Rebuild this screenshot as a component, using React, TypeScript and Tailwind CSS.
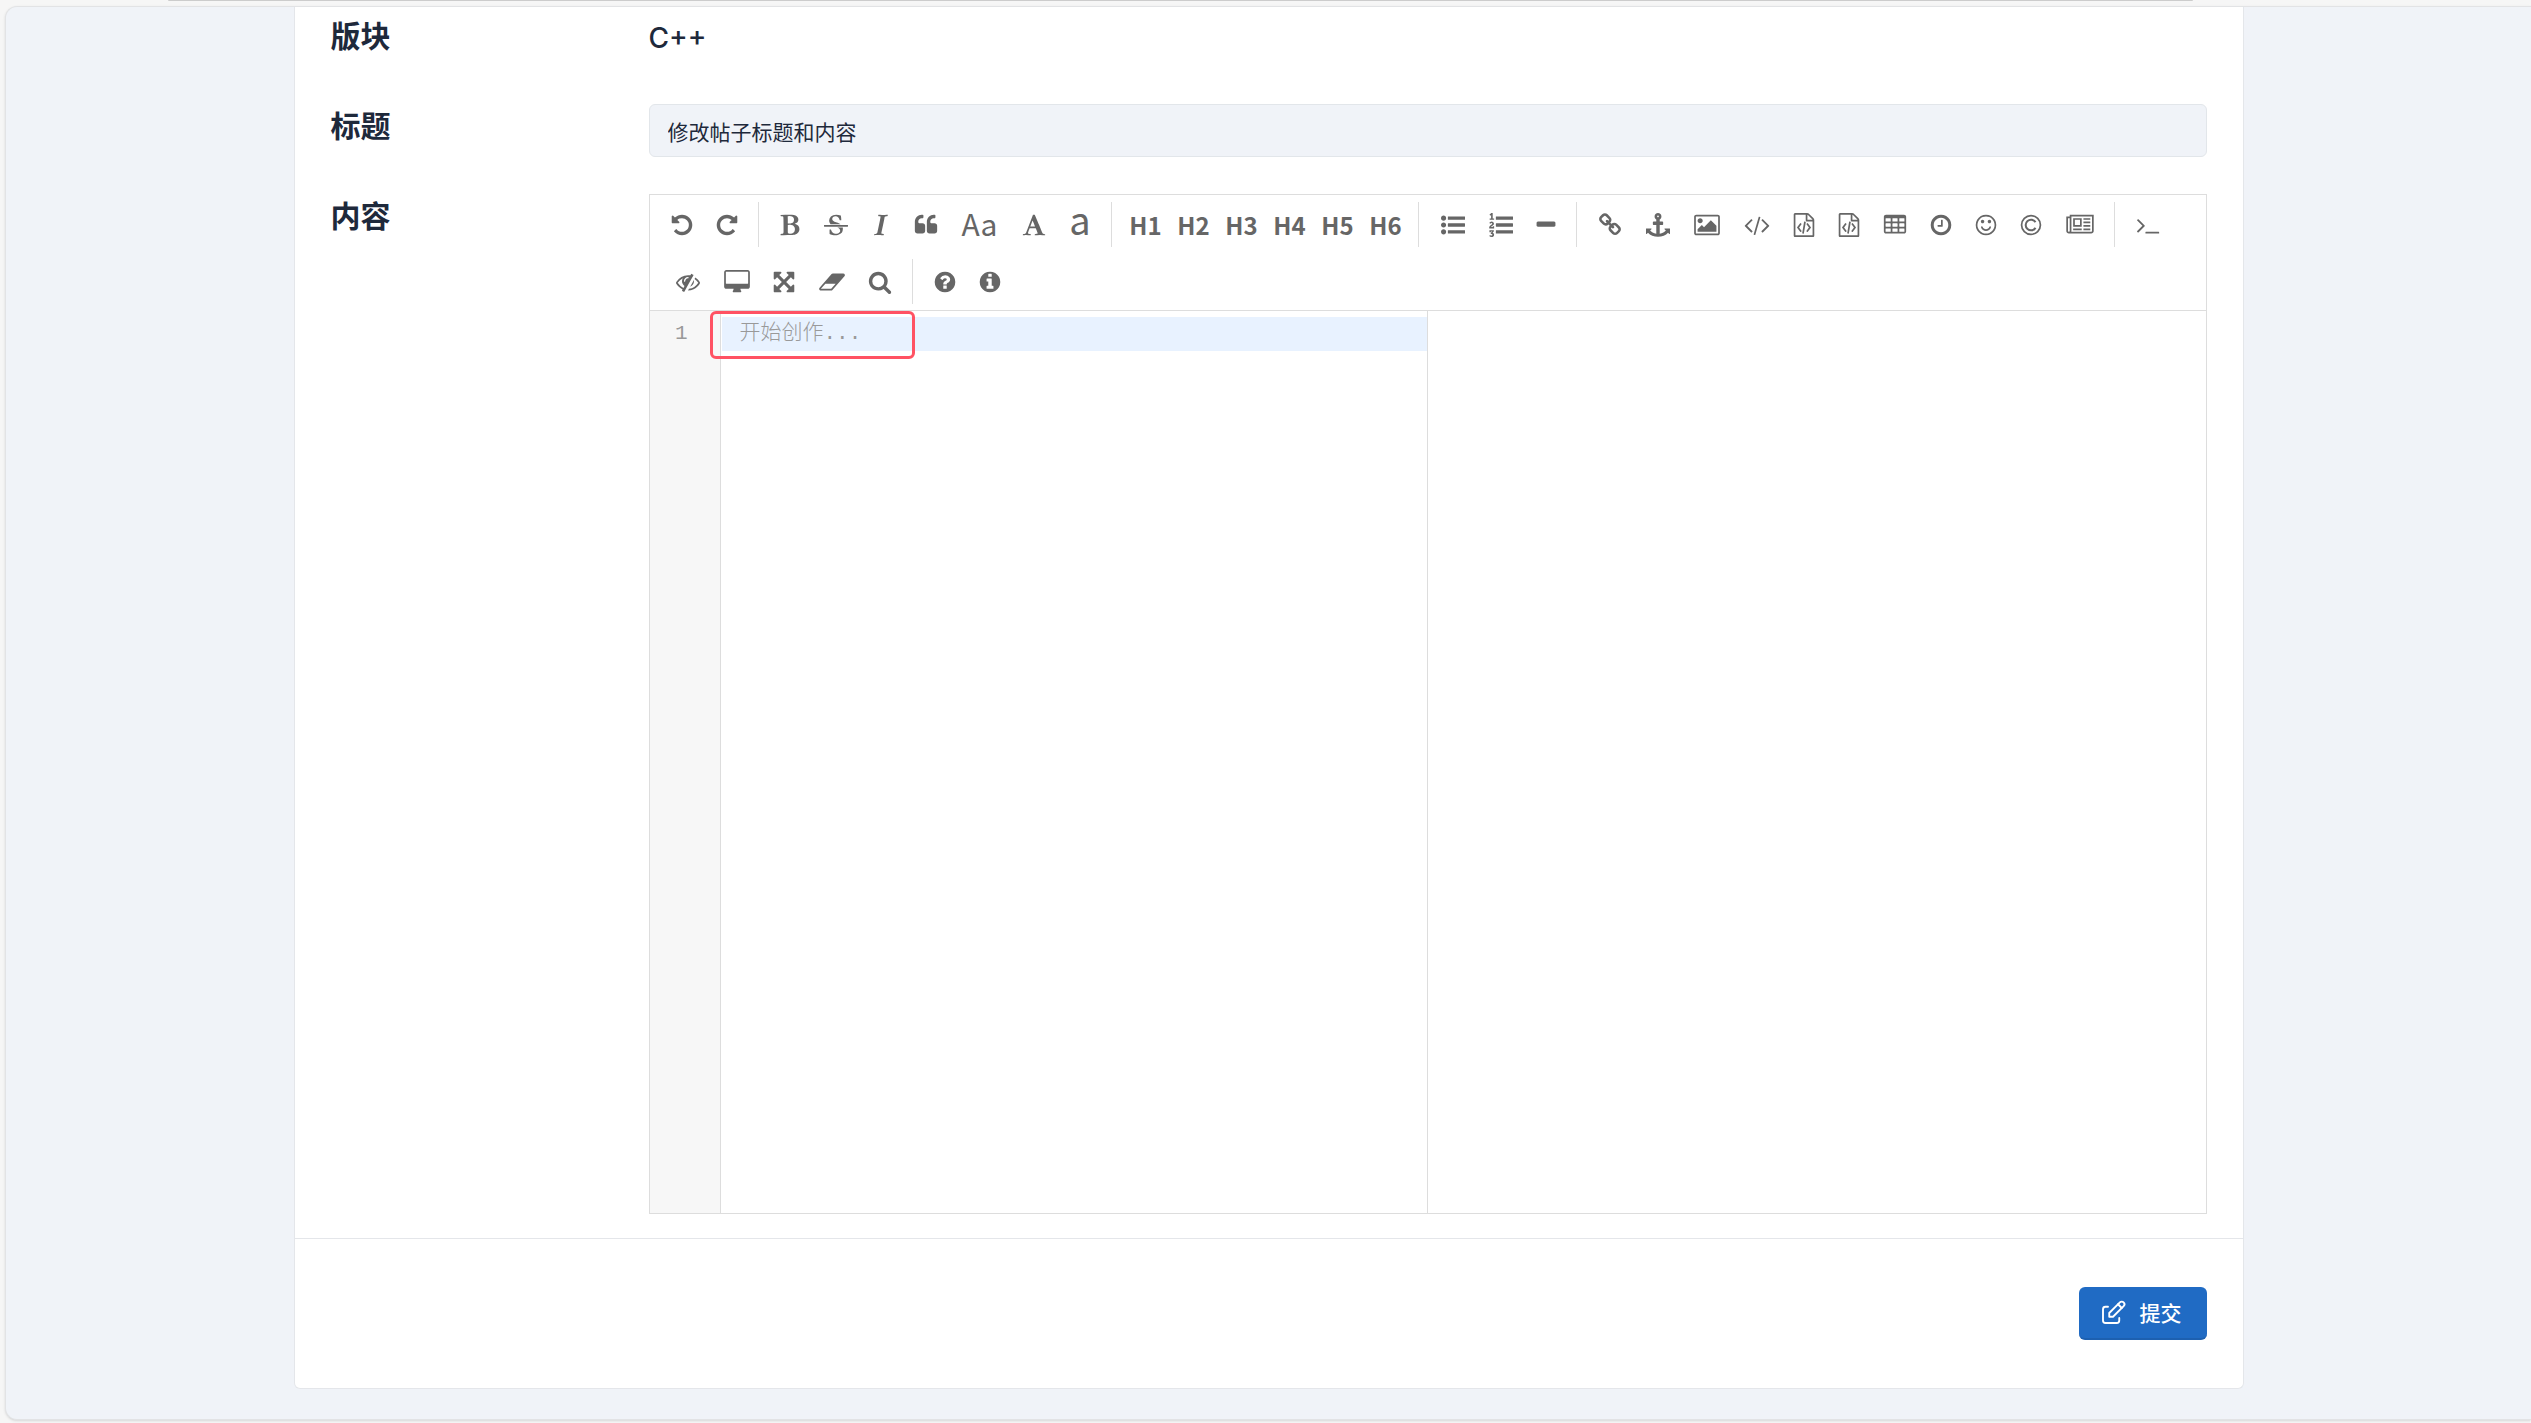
import type { ReactNode } from "react";

const sansCjk = "font-['Noto_Sans_CJK_SC',sans-serif]";

type Glyph = { vb: string; size: string; d: string[] };

const SQUARE = "0 0 1792 1792";
const FULL = "-64 0 1920 1792";

const glyphs: Record<string, Glyph> = {
  undo: { vb: SQUARE, size: "w-6", d: ["M1664 896q0 156-61 298t-164 245-245 164-298 61q-172 0-327-72.5t-264-204.5q-7-10-6.5-22.5t8.5-20.5l137-138q10-9 25-9 16 2 23 12 73 95 179 147t225 52q104 0 198.5-40.5t163.5-109.5 109.5-163.5 40.5-198.5-40.5-198.5-109.5-163.5-163.5-109.5-198.5-40.5q-98 0-188 35.5t-160 101.5l137 138q31 30 14 69-17 40-59 40h-448q-26 0-45-19t-19-45v-448q0-42 40-59 39-17 69 14l130 129q107-101 244.5-156.5t284.5-55.5q156 0 298 61t245 164 164 245 61 298z"] },
  redo: { vb: SQUARE, size: "w-6", d: ["M1664 256v448q0 26-19 45t-45 19h-448q-42 0-59-40-17-39 14-69l138-138q-148-137-349-137-104 0-198.5 40.5t-163.5 109.5-109.5 163.5-40.5 198.5 40.5 198.5 109.5 163.5 163.5 109.5 198.5 40.5q119 0 225-52t179-147q7-10 23-12 15 0 25 9l137 138q9 8 9.5 20.5t-7.5 22.5q-109 132-264 204.5t-327 72.5q-156 0-298-61t-245-164-164-245-61-298 61-298 164-245 245-164 298-61q147 0 284.5 55.5t244.5 156.5l130-129q29-31 70-14 39 17 39 59z"] },
  bold: { vb: SQUARE, size: "w-6", d: ["M747 1521q74 32 140 32 376 0 376-335 0-114-41-180-27-44-61.5-74t-67.5-46.5-80.5-25-84-10.5-94.5-2q-73 0-101 10 0 53-.5 159t-.5 158q0 8-1 67.5t-.5 96.5 4.5 83.5 12 66.5zm-14-746q42 7 109 7 82 0 143-13t110-44.5 74.5-89.5 25.5-142q0-70-29-122.5t-79-82-108-43.5-124-14q-50 0-130 13 0 50 4 151t4 152q0 27-.5 80t-.5 79q0 46 1 69zm-541 889l2-94q15-4 85-16t106-27q7-12 12.5-27t8.5-33.5 5.5-32.5 3-37.5.5-34v-65.5q0-982-22-1025-4-8-22-14.5t-44.5-11-49.5-7-48.5-4.5-30.5-3l-4-83q98-2 340-11.5t373-9.5q23 0 68 .5t68 .5q70 0 136.5 13t128.5 42 108 71 74 104.5 28 137.5q0 52-16.5 95.5t-39 72-64.5 57.5-73 45-84 40q154 35 256.5 134t102.5 248q0 100-35 179.5t-93.5 130.5-138 85.5-163.5 48.5-176 14q-44 0-132-3t-132-3q-106 0-307 11t-231 12z"] },
  strike: { vb: SQUARE, size: "w-6", d: ["M1760 896q14 0 23 9t9 23v64q0 14-9 23t-23 9h-1728q-14 0-23-9t-9-23v-64q0-14 9-23t23-9h1728zm-1277-64q-28-35-51-80-48-97-48-188 0-181 134-309 133-127 393-127 50 0 167 19 66 12 177 48 10 38 21 118 14 123 14 183 0 18-5 45l-12 3-84-6-14-2q-50-149-103-205-88-91-210-91-114 0-182 59-67 58-67 146 0 73 66 140t279 129q69 20 173 66 58 28 95 52h-743zm507 256h411q7 39 7 92 0 111-41 212-23 55-71 104-37 35-109 81-80 48-153 66-80 21-203 21-114 0-195-23l-140-40q-57-16-72-28-8-8-8-22v-13q0-108-2-156-1-30 0-68l2-37v-44l102-2q15 34 30 71t22.5 56 12.5 27q35 57 80 94 43 36 105 57 59 22 132 22 64 0 139-27 77-26 122-86 47-61 47-129 0-84-81-157-34-29-137-71z"] },
  italic: { vb: SQUARE, size: "w-6", d: ["M384 1662l17-85q22-7 61.5-16.5t72-19 59.5-23.5q28-35 41-101 1-7 62-289t114-543.5 52-296.5v-25q-24-13-54.5-18.5t-69.5-8-58-5.5l19-103q33 2 120 6.5t149.5 7 120.5 2.5q48 0 98.5-2.5t121-7 98.5-6.5q-5 39-19 89-30 10-101.5 28.5t-108.5 33.5q-8 19-14 42.5t-9 40-7.5 45.5-6.5 42q-27 148-87.5 419.5t-77.5 355.5q-2 9-13 58t-20 90-16 83.5-6 57.5l1 18q17 4 185 31-3 44-16 99-11 0-32.5 1.5t-32.5 1.5q-29 0-87-10t-86-10q-138-2-206-2-51 0-143 9t-121 11z"] },
  quote: { vb: SQUARE, size: "w-6", d: ["M832 960v384q0 80-56 136t-136 56h-384q-80 0-136-56t-56-136v-704q0-104 40.5-198.5t109.5-163.5 163.5-109.5 198.5-40.5h64q26 0 45 19t19 45v128q0 26-19 45t-45 19h-64q-106 0-181 75t-75 181v32q0 40 28 68t68 28h224q80 0 136 56t56 136zm896 0v384q0 80-56 136t-136 56h-384q-80 0-136-56t-56-136v-704q0-104 40.5-198.5t109.5-163.5 163.5-109.5 198.5-40.5h64q26 0 45 19t19 45v128q0 26-19 45t-45 19h-64q-106 0-181 75t-75 181v32q0 40 28 68t68 28h224q80 0 136 56t56 136z"] },
  font: { vb: SQUARE, size: "w-6", d: ["M789 559l-170 450q33 0 136.5 2t160.5 2q19 0 57-2-87-253-184-452zm-725 1105l2-79q23-7 56-12.5t57-10.5 49.5-14.5 44.5-29 31-50.5l237-616 280-724h128q8 14 11 21l205 480q33 78 106 257.5t114 274.5q15 34 58 144.5t72 168.5q20 45 35 57 19 15 88 29.5t84 20.5q6 38 6 57 0 5-.5 13.5t-.5 12.5q-63 0-190-8t-191-8q-76 0-215 7t-178 8q0-43 4-78l131-28q1 0 12.5-2.5t15.5-3.5 14.5-4.5 15-6.5 11-8 9-11 2.5-14q0-16-31-96.5t-72-177.5-42-100l-450-2q-26 58-76.5 195.5t-50.5 162.5q0 22 14 37.5t43.5 24.5 48.5 13.5 57 8.5 41 4q1 19 1 58 0 9-2 27-58 0-174.5-10t-174.5-10q-8 0-26.5 4t-21.5 4q-80 14-188 14z"] },
  ul: { vb: SQUARE, size: "w-6", d: ["M384 1408q0 80-56 136t-136 56-136-56-56-136 56-136 136-56 136 56 56 136zm0-512q0 80-56 136t-136 56-136-56-56-136 56-136 136-56 136 56 56 136zm1408 416v192q0 13-9.5 22.5t-22.5 9.5h-1216q-13 0-22.5-9.5t-9.5-22.5v-192q0-13 9.5-22.5t22.5-9.5h1216q13 0 22.5 9.5t9.5 22.5zm-1408-928q0 80-56 136t-136 56-136-56-56-136 56-136 136-56 136 56 56 136zm1408 416v192q0 13-9.5 22.5t-22.5 9.5h-1216q-13 0-22.5-9.5t-9.5-22.5v-192q0-13 9.5-22.5t22.5-9.5h1216q13 0 22.5 9.5t9.5 22.5zm0-512v192q0 13-9.5 22.5t-22.5 9.5h-1216q-13 0-22.5-9.5t-9.5-22.5v-192q0-13 9.5-22.5t22.5-9.5h1216q13 0 22.5 9.5t9.5 22.5z"] },
  ol: { vb: SQUARE, size: "w-6", d: ["M381 1620q0 80-54.5 126t-135.5 46q-106 0-172-66l57-88q49 45 106 45 29 0 50.5-14.5t21.5-42.5q0-64-105-56l-26-56q8-10 32.5-43.5t42.5-54 37-38.5v-1q-16 0-48.5 1t-48.5 1v53h-106v-152h333v88l-95 115q51 12 81 49t30 88zm2-627v159h-362q-6-36-6-54 0-51 23.5-93t56.5-68 66-47.5 56.5-43.5 23.5-45q0-25-14.5-38.5t-39.5-13.5q-46 0-81 58l-85-59q24-51 71.5-79.5t105.5-28.5q73 0 123 41.5t50 112.5q0 50-34 91.5t-75 64.5-75.5 50.5-35.5 52.5h127v-60h105zm1409 319v192q0 13-9.5 22.5t-22.5 9.5h-1216q-13 0-22.5-9.5t-9.5-22.5v-192q0-14 9-23t23-9h1216q13 0 22.5 9.5t9.5 22.5zm-1408-899v99h-335v-99h107q0-41 .5-121.5t.5-121.5v-12h-2q-8 17-50 54l-71-76 136-127h106v404h108zm1408 387v192q0 13-9.5 22.5t-22.5 9.5h-1216q-13 0-22.5-9.5t-9.5-22.5v-192q0-14 9-23t23-9h1216q13 0 22.5 9.5t9.5 22.5zm0-512v192q0 13-9.5 22.5t-22.5 9.5h-1216q-13 0-22.5-9.5t-9.5-22.5v-192q0-13 9.5-22.5t22.5-9.5h1216q13 0 22.5 9.5t9.5 22.5z"] },
  minus: { vb: SQUARE, size: "w-6", d: ["M1600 736v192q0 40-28 68t-68 28h-1216q-40 0-68-28t-28-68v-192q0-40 28-68t68-28h1216q40 0 68 28t28 68z"] },
  link: { vb: SQUARE, size: "w-6", d: ["M1520 1216q0-40-28-68l-208-208q-28-28-68-28-42 0-72 32 3 3 19 18.5t21.5 21.5 15 19 13 25.5 3.5 27.5q0 40-28 68t-68 28q-15 0-27.5-3.5t-25.5-13-19-15-21.5-21.5-18.5-19q-33 31-33 73 0 40 28 68l206 207q27 27 68 27 40 0 68-26l147-146q28-28 28-67zm-703-705q0-40-28-68l-206-207q-28-28-68-28-39 0-68 27l-147 146q-28 28-28 67 0 40 28 68l208 208q27 27 68 27 42 0 72-31-3-3-19-18.5t-21.5-21.5-15-19-13-25.5-3.5-27.5q0-40 28-68t68-28q15 0 27.5 3.5t25.5 13 19 15 21.5 21.5 18.5 19q33-31 33-73zm895 705q0 120-85 203l-147 146q-83 83-203 83-121 0-204-85l-206-207q-83-83-83-203 0-123 88-209l-88-88q-86 88-208 88-120 0-204-84l-208-208q-84-84-84-204t85-203l147-146q83-83 203-83 121 0 204 85l206 207q83 83 83 203 0 123-88 209l88 88q86-88 208-88 120 0 204 84l208 208q84 84 84 204z"] },
  anchor: { vb: SQUARE, size: "w-6", d: ["M960 256q0-26-19-45t-45-19-45 19-19 45 19 45 45 19 45-19 19-45zm832 928v352q0 22-20 30-8 2-12 2-12 0-23-9l-93-93q-119 143-318.5 226.5t-429.5 83.5-429.5-83.5-318.5-226.5l-93 93q-9 9-23 9-4 0-12-2-20-8-20-30v-352q0-14 9-23t23-9h352q22 0 30 20 8 19-7 35l-100 100q67 91 189.5 153.5t271.5 82.5v-647h-192q-26 0-45-19t-19-45v-128q0-26 19-45t45-19h192v-163q-58-34-93-92.5t-35-128.5q0-106 75-181t181-75 181 75 75 181q0 70-35 128.5t-93 92.5v163h192q26 0 45 19t19 45v128q0 26-19 45t-45 19h-192v647q149-20 271.5-82.5t189.5-153.5l-100-100q-15-16-7-35 8-20 30-20h352q14 0 23 9t9 23z"] },
  picture: { vb: FULL, size: "w-[26px]", d: ["M576 576q0 80-56 136t-136 56-136-56-56-136 56-136 136-56 136 56 56 136zm1024 384v448h-1408v-192l320-320 160 160 512-512zm96-704h-1600q-13 0-22.5 9.5t-9.5 22.5v1216q0 13 9.5 22.5t22.5 9.5h1600q13 0 22.5-9.5t9.5-22.5v-1216q0-13-9.5-22.5t-22.5-9.5zm160 32v1216q0 66-47 113t-113 47h-1600q-66 0-113-47t-47-113v-1216q0-66 47-113t113-47h1600q66 0 113 47t47 113z"] },
  code: { vb: "0 0 1920 1792", size: "w-[26px]", d: ["M617 1399l-50 50q-10 10-23 10t-23-10l-466-466q-10-10-10-23t10-23l466-466q10-10 23-10t23 10l50 50q10 10 10 23t-10 23l-393 393 393 393q10 10 10 23t-10 23zm591-1067l-373 1291q-4 13-15.5 19.5t-23.5 2.5l-62-17q-13-4-19.5-15.5t-2.5-24.5l373-1291q4-13 15.5-19.5t23.5-2.5l62 17q13 4 19.5 15.5t2.5 24.5zm657 651l-466 466q-10 10-23 10t-23-10l-50-50q-10-10-10-23t10-23l393-393-393-393q-10-10-10-23t10-23l50-50q10-10 23-10t23 10l466 466q10 10 10 23t-10 23z"] },
  file: { vb: SQUARE, size: "w-6", d: ["M1596 380q28 28 48 76t20 88v1152q0 40-28 68t-68 28h-1344q-40 0-68-28t-28-68v-1600q0-40 28-68t68-28h896q40 0 88 20t76 48zm-444-244v376h376q-10-29-22-41l-313-313q-12-12-41-22zm384 1528v-1024h-416q-40 0-68-28t-28-68v-416h-768v1536h1280zm-928-896q8-11 21-12.5t24 6.5l51 38q11 8 12.5 21t-6.5 24l-182 243 182 243q8 11 6.5 24t-12.5 21l-51 38q-11 8-24 6.5t-21-12.5l-226-301q-14-19 0-38zm802 301q14 19 0 38l-226 301q-8 11-21 12.5t-24-6.5l-51-38q-11-8-12.5-21t6.5-24l182-243-182-243q-8-11-6.5-24t12.5-21l51-38q11-8 24-6.5t21 12.5zm-620 461q-13-2-20.5-13t-5.5-24l138-831q2-13 13-20.5t24-5.5l63 10q13 2 20.5 13t5.5 24l-138 831q-2 13-13 20.5t-24 5.5z"] },
  table: { vb: SQUARE, size: "w-6", d: [
    "M224 128h1344q66 0 113 47t47 113v1088q0 66-47 113t-113 47h-1344q-66 0-113-47t-47-113v-1088q0-66 47-113t113-47zM224 384h320q32 0 32 32v192q0 32-32 32h-320q-32 0-32-32v-192q0-32 32-32zM736 384h320q32 0 32 32v192q0 32-32 32h-320q-32 0-32-32v-192q0-32 32-32zM1248 384h320q32 0 32 32v192q0 32-32 32h-320q-32 0-32-32v-192q0-32 32-32zM224 768h320q32 0 32 32v192q0 32-32 32h-320q-32 0-32-32v-192q0-32 32-32zM736 768h320q32 0 32 32v192q0 32-32 32h-320q-32 0-32-32v-192q0-32 32-32zM1248 768h320q32 0 32 32v192q0 32-32 32h-320q-32 0-32-32v-192q0-32 32-32zM224 1152h320q32 0 32 32v192q0 32-32 32h-320q-32 0-32-32v-192q0-32 32-32zM736 1152h320q32 0 32 32v192q0 32-32 32h-320q-32 0-32-32v-192q0-32 32-32zM1248 1152h320q32 0 32 32v192q0 32-32 32h-320q-32 0-32-32v-192q0-32 32-32z",
  ] },
  clock: { vb: SQUARE, size: "w-6", d: ["M1024 544v448q0 14-9 23t-23 9h-320q-14 0-23-9t-9-23v-64q0-14 9-23t23-9h224v-352q0-14 9-23t23-9h64q14 0 23 9t9 23zm416 352q0-148-73-273t-198-198-273-73-273 73-198 198-73 273 73 273 198 198 273 73 273-73 198-198 73-273zm224 0q0 209-103 385.5t-279.5 279.5-385.5 103-385.5-103-279.5-279.5-103-385.5 103-385.5 279.5-279.5 385.5-103 385.5 103 279.5 279.5 103 385.5z"] },
  smile: { vb: SQUARE, size: "w-6", d: ["M1262 1075q-37 121-138 195t-228 74-228-74-138-195q-8-25 4-48.5t38-31.5q25-8 48.5 4t31.5 38q25 80 92.5 129.5t151.5 49.5 151.5-49.5 92.5-129.5q8-26 32-38t49-4 37 31.5 4 48.5zm-494-435q0 53-37.5 90.5t-90.5 37.5-90.5-37.5-37.5-90.5 37.5-90.5 90.5-37.5 90.5 37.5 37.5 90.5zm512 0q0 53-37.5 90.5t-90.5 37.5-90.5-37.5-37.5-90.5 37.5-90.5 90.5-37.5 90.5 37.5 37.5 90.5zm256 256q0-130-51-248.5t-136.5-204-204-136.5-248.5-51-248.5 51-204 136.5-136.5 204-51 248.5 51 248.5 136.5 204 204 136.5 248.5 51 248.5-51 204-136.5 136.5-204 51-248.5zm128 0q0 209-103 385.5t-279.5 279.5-385.5 103-385.5-103-279.5-279.5-103-385.5 103-385.5 279.5-279.5 385.5-103 385.5 103 279.5 279.5 103 385.5z"] },
  news: { vb: "0 0 2048 1792", size: "w-7", d: ["M1024 512h-384v384h384v-384zm128 640v128h-640v-128h640zm0-768v640h-640v-640h640zm640 768v128h-512v-128h512zm0-256v128h-512v-128h512zm0-256v128h-512v-128h512zm0-256v128h-512v-128h512zm-1536 960v-960h-128v960q0 26 19 45t45 19 45-19 19-45zm1664 0v-1088h-1536v1088q0 33-11 64h1483q26 0 45-19t19-45zm128-1216v1216q0 80-56 136t-136 56h-1664q-80 0-136-56t-56-136v-1088h256v-128h1792z"] },
  terminal: { vb: SQUARE, size: "w-6", d: ["M649 983l-466 466q-10 10-23 10t-23-10l-50-50q-10-10-10-23t10-23l393-393-393-393q-10-10-10-23t10-23l50-50q10-10 23-10t23 10l466 466q10 10 10 23t-10 23zm1079 457v64q0 14-9 23t-23 9h-960q-14 0-23-9t-9-23v-64q0-14 9-23t23-9h960q14 0 23 9t9 23z"] },
  eye: { vb: SQUARE, size: "w-6", d: ["M555 1335l78-141q-87-63-136-159t-49-203q0-121 61-225-229 117-381 353 167 258 427 375zm389-759q0-20-14-34t-34-14q-125 0-214.5 89.5t-89.5 214.5q0 20 14 34t34 14 34-14 14-34q0-86 61-147t147-61q20 0 34-14t14-34zm363-191q0 7-1 9-106 189-316 567t-315 566l-49 89q-10 16-28 16-12 0-134-70-16-10-16-28 0-12 44-87-143-65-263.5-173t-208.5-245q-20-31-20-69t20-69q153-235 380-371t496-136q89 0 180 17l54-97q10-16 28-16 5 0 18 6t31 15.5 33 18.5 31.5 18.5 19.5 11.5q16 10 16 27zm37 447q0 139-79 253.5t-209 164.5l280-502q8 45 8 84zm448 128q0 35-20 69-39 64-109 145-150 172-347.5 267t-419.5 95l74-132q212-18 392.5-137t301.5-307q-115-179-282-294l63-112q95 64 182.5 153t144.5 184q20 34 20 69z"] },
  desktop: { vb: FULL, size: "w-[26px]", d: ["M1728 992v-832q0-13-9.5-22.5t-22.5-9.5h-1600q-13 0-22.5 9.5t-9.5 22.5v832q0 13 9.5 22.5t22.5 9.5h1600q13 0 22.5-9.5t9.5-22.5zm128-832v1088q0 66-47 113t-113 47h-544q0 37 16 77.5t32 71 16 43.5q0 26-19 45t-45 19h-512q-26 0-45-19t-19-45q0-14 16-44t32-70 16-78h-544q-66 0-113-47t-47-113v-1088q0-66 47-113t113-47h1600q66 0 113 47t47 113z"] },
  expand: { vb: SQUARE, size: "w-6", d: ["M1411 541l-355 355 355 355 144-144q29-31 70-14 39 17 39 59v448q0 26-19 45t-45 19h-448q-42 0-59-40-17-39 14-69l144-144-355-355-355 355 144 144q31 30 14 69-17 40-59 40h-448q-26 0-45-19t-19-45v-448q0-42 40-59 39-17 69 14l144 144 355-355-355-355-144 144q-19 19-45 19-12 0-24-5-40-17-40-59v-448q0-26 19-45t45-19h448q42 0 59 40 17 39-14 69l-144 144 355 355 355-355-144-144q-31-30-14-69 17-40 59-40h448q26 0 45 19t19 45v448q0 42-39 59-13 5-25 5-26 0-45-19z"] },
  eraser: { vb: FULL, size: "w-[26px]", d: ["M832 1408l336-384h-768l-336 384h768zm1013-1077q15 34 9.5 71.5t-30.5 65.5l-896 1024q-38 44-96 44h-768q-38 0-69.5-20.5t-47.5-54.5q-15-34-9.5-71.5t30.5-65.5l896-1024q38-44 96-44h768q38 0 69.5 20.5t47.5 54.5z"] },
  search: { vb: SQUARE, size: "w-6", d: ["M1216 832q0-185-131.5-316.5t-316.5-131.5-316.5 131.5-131.5 316.5 131.5 316.5 316.5 131.5 316.5-131.5 131.5-316.5zm512 832q0 52-38 90t-90 38q-54 0-90-38l-343-342q-179 124-399 124-143 0-273.5-55.5t-225-150-150-225-55.5-273.5 55.5-273.5 150-225 225-150 273.5-55.5 273.5 55.5 225 150 150 225 55.5 273.5q0 220-124 399l343 343q37 37 37 90z"] },
  help: { vb: SQUARE, size: "w-6", d: ["M1024 1376v-192q0-14-9-23t-23-9h-192q-14 0-23 9t-9 23v192q0 14 9 23t23 9h192q14 0 23-9t9-23zm256-672q0-88-55.5-163t-138.5-116-170-41q-243 0-371 213-15 24 8 42l132 100q7 6 19 6 16 0 25-12 53-68 86-92 34-24 86-24 48 0 85.5 26t37.5 59q0 38-20 61t-68 45q-63 28-115.5 86.5t-52.5 125.5v36q0 14 9 23t23 9h192q14 0 23-9t9-23q0-19 21.5-49.5t54.5-49.5q32-18 49-28.5t46-35 44.5-48 28-60.5 12.5-81zm384 192q0 209-103 385.5t-279.5 279.5-385.5 103-385.5-103-279.5-279.5-103-385.5 103-385.5 279.5-279.5 385.5-103 385.5 103 279.5 279.5 103 385.5z"] },
  info: { vb: SQUARE, size: "w-6", d: ["M1152 1376v-160q0-14-9-23t-23-9h-96v-512q0-14-9-23t-23-9h-320q-14 0-23 9t-9 23v160q0 14 9 23t23 9h96v320h-96q-14 0-23 9t-9 23v160q0 14 9 23t23 9h448q14 0 23-9t9-23zm-128-896v-160q0-14-9-23t-23-9h-192q-14 0-23 9t-9 23v160q0 14 9 23t23 9h192q14 0 23-9t9-23zm640 416q0 209-103 385.5t-279.5 279.5-385.5 103-385.5-103-279.5-279.5-103-385.5 103-385.5 279.5-279.5 385.5-103 385.5 103 279.5 279.5 103 385.5z"] },
};

function GlyphIcon({ name }: { name: string }) {
  const g = glyphs[name];
  return (
    <svg viewBox={g.vb} className={`h-6 shrink-0 ${g.size}`} fill="currentColor" fillRule="evenodd" aria-hidden="true">
      {g.d.map((d) => (
        <path key={d} d={d} />
      ))}
    </svg>
  );
}

function CopyrightIcon() {
  return (
    <svg viewBox="0 0 1792 1792" className="h-6 w-6 shrink-0" fill="none" stroke="currentColor" aria-hidden="true">
      <circle cx="896" cy="896" r="704" strokeWidth="128" />
      <path d="M1235 680a400 400 0 1 0 0 432" strokeWidth="150" />
    </svg>
  );
}

type Tool = { label: string; width: string; icon?: string; content?: ReactNode };

const heading = (n: number): Tool => ({
  label: `标题${n}`,
  width: "w-12",
  content: <span className="text-2xl font-bold">H{n}</span>,
});

const groups: Tool[][] = [
  [
    { label: "撤销", width: "w-[45px]", icon: "undo" },
    { label: "重做", width: "w-[45px]", icon: "redo" },
  ],
  [
    { label: "粗体", width: "w-[43px]", icon: "bold" },
    { label: "删除线", width: "w-12", icon: "strike" },
    { label: "斜体", width: "w-[43px]", icon: "italic" },
    { label: "引用", width: "w-[47px]", icon: "quote" },
    { label: "首字母大写", width: "w-[60px]", content: <span className="pb-1 text-[30px] leading-none font-normal">Aa</span> },
    { label: "大写", width: "w-12", icon: "font" },
    { label: "小写", width: "w-[45px]", content: <span className="pb-3 text-[38px] leading-none font-normal">a</span> },
  ],
  [1, 2, 3, 4, 5, 6].map(heading),
  [
    { label: "无序列表", width: "w-12", icon: "ul" },
    { label: "有序列表", width: "w-12", icon: "ol" },
    { label: "横线", width: "w-[43px]", icon: "minus" },
  ],
  [
    { label: "链接", width: "w-[47px]", icon: "link" },
    { label: "引用链接", width: "w-12", icon: "anchor" },
    { label: "图片", width: "w-[50px]", icon: "picture" },
    { label: "行内代码", width: "w-[50px]", icon: "code" },
    { label: "预格式文本", width: "w-[45px]", icon: "file" },
    { label: "代码块", width: "w-[45px]", icon: "file" },
    { label: "表格", width: "w-[47px]", icon: "table" },
    { label: "日期时间", width: "w-[45px]", icon: "clock" },
    { label: "表情", width: "w-[45px]", icon: "smile" },
    { label: "实体字符", width: "w-[45px]", content: <CopyrightIcon /> },
    { label: "分页符", width: "w-[52px]", icon: "news" },
  ],
  [
    { label: "跳转到行", width: "w-[47px]", icon: "terminal" },
    { label: "关闭预览", width: "ml-1 w-12", icon: "eye" },
    { label: "全窗口预览", width: "w-[50px]", icon: "desktop" },
    { label: "全屏", width: "w-[45px]", icon: "expand" },
    { label: "清空", width: "w-[50px]", icon: "eraser" },
    { label: "搜索", width: "w-[47px]", icon: "search" },
  ],
  [
    { label: "帮助", width: "w-[45px]", icon: "help" },
    { label: "关于", width: "w-[45px]", icon: "info" },
  ],
];

function Toolbar() {
  return (
    <div role="toolbar" aria-label="编辑工具" className="flex flex-wrap border-b border-[#dddddd] px-[10px] pt-px pr-8 text-[#666666]">
      {groups.flatMap((group, gi) => [
        ...(gi > 0
          ? [<span key={`sep-${gi}`} className="mr-[10px] ml-2 my-[6px] h-[45px] w-px bg-[#dddddd]" />]
          : []),
        ...group.map((tool) => (
          <button
            key={tool.label}
            type="button"
            aria-label={tool.label}
            className={`flex h-[57px] items-center justify-center leading-none ${tool.width}`}
          >
            {tool.icon ? <GlyphIcon name={tool.icon} /> : tool.content}
          </button>
        )),
      ])}
    </div>
  );
}

function Editor() {
  return (
    <div className="flex min-w-0 grow flex-col border border-[#dddddd]">
      <Toolbar />
      <div className="flex h-[902px]">
        <div className="flex w-1/2 border-r border-[#dddddd] font-['Liberation_Mono','Noto_Sans_CJK_SC',monospace] text-[21px]">
          <div className="w-[71px] shrink-0 border-r border-[#dddddd] bg-[#f7f7f7] pt-[6px] pr-8 text-right leading-[34px] text-[#999999]">
            1
          </div>
          <div className="relative grow pt-[6px] pl-px">
            <textarea
              id="content"
              rows={1}
              placeholder="开始创作..."
              className="block h-[34px] w-full resize-none overflow-hidden bg-[#e8f2ff] pl-[18px] leading-[34px] font-light outline-none placeholder:text-[#999999]"
            />
            <div className="pointer-events-none absolute top-0 -left-[11px] h-12 w-[205px] rounded-md border-[3px] border-[#ff5263]" />
          </div>
        </div>
        <div className="w-1/2" />
      </div>
    </div>
  );
}

function EditIcon() {
  return (
    <svg
      viewBox="0 0 24 24"
      className="h-[30px] w-[30px]"
      fill="none"
      stroke="currentColor"
      strokeWidth="1.5"
      strokeLinecap="round"
      strokeLinejoin="round"
      aria-hidden="true"
    >
      <path d="M8 7H6a2 2 0 0 0-2 2v9a2 2 0 0 0 2 2h9a2 2 0 0 0 2-2v-2" />
      <path d="M9 15h3l8.500-8.500a1.500 1.500 0 0 0-3-3L9 12v3" />
      <path d="M16 5l3 3" />
    </svg>
  );
}

export default function App() {
  return (
    <div className={`min-h-screen bg-[#f6f6f6] pl-[5px] text-[#1e293b] ${sansCjk}`}>
      <div className="flex h-[6px] justify-center pr-[338px] pl-[163px]">
        <div className="h-px grow rounded-b bg-[#cccccc]" />
      </div>
      <div className="rounded-l-xl border border-r-0 border-[#e2e3e5] bg-[#f0f3f8] pb-[30px] shadow-sm">
        <main className="mx-auto max-w-[1950px] rounded-b-md border border-t-0 border-[#e4e6ea] bg-white">
          <form onSubmit={(e) => e.preventDefault()}>
            <div className="flex flex-col px-9 pb-6">
              <div className="flex h-[97px] items-start">
                <span className="w-[318px] shrink-0 pt-[11px] text-[30px] leading-8 font-bold">版块</span>
                <span className="pt-[15px] font-['Inter',sans-serif] text-[28px] leading-8 font-medium">C++</span>
              </div>
              <div className="flex items-start pb-[37px]">
                <label htmlFor="title" className="w-[318px] shrink-0 pt-1 text-[30px] leading-8 font-bold">
                  标题
                </label>
                <input
                  id="title"
                  defaultValue="修改帖子标题和内容"
                  className="h-[53px] min-w-0 grow rounded-md border border-[#e2e6ea] bg-[#f0f3f8] px-[18px] text-[21px] outline-none"
                />
              </div>
              <div className="flex">
                <label htmlFor="content" className="w-[318px] shrink-0 self-start pt-1 text-[30px] leading-8 font-bold">
                  内容
                </label>
                <Editor />
              </div>
            </div>
            <div className="flex justify-end border-t border-[#e4e6ea] px-9 py-12">
              <button
                type="submit"
                className="flex h-[53px] w-32 items-center gap-3 rounded-md border-b-2 border-[#1d60b0] bg-[#206bc4] pl-[19px] text-[21px] font-medium text-white"
              >
                <EditIcon />
                提交
              </button>
            </div>
          </form>
        </main>
      </div>
    </div>
  );
}
